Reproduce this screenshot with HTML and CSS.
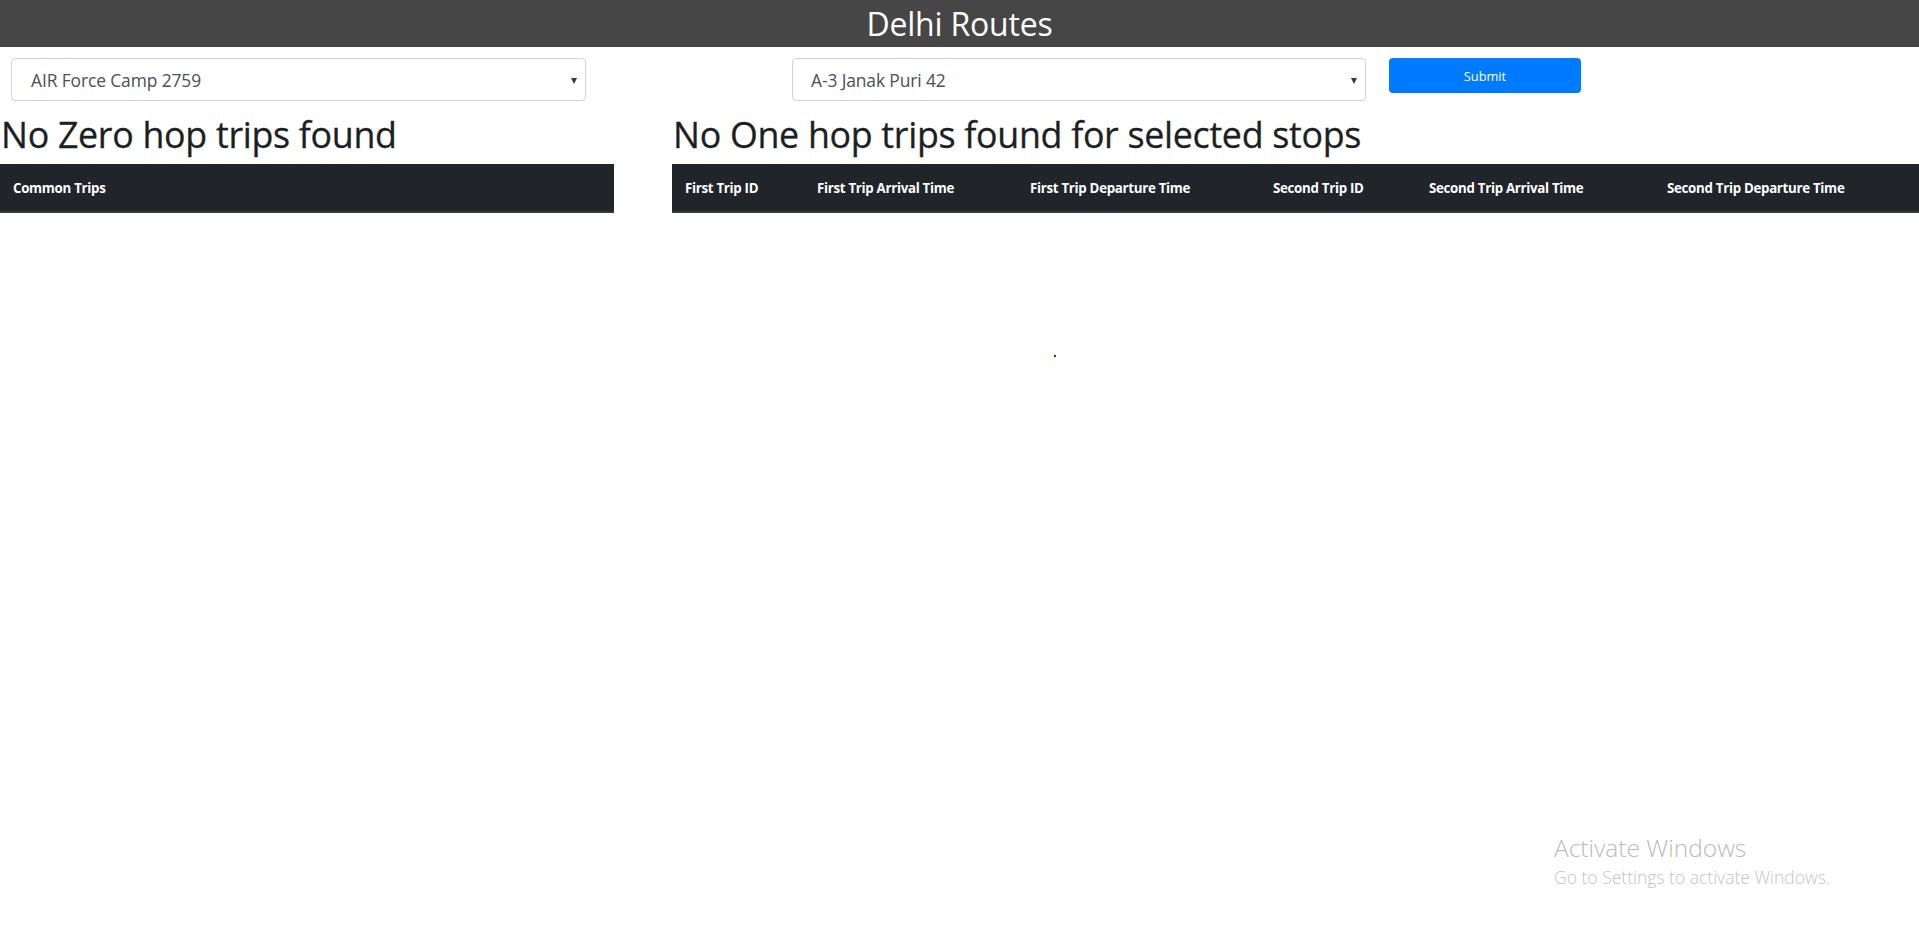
FILE: index.html
```html
<!DOCTYPE html>
<html lang="en">
<head>
<meta charset="utf-8">
<title>Delhi Routes</title>
<link rel="stylesheet" href="styles.css">
</head>
<body>
<header class="topbar">
  <h1 class="brand">Delhi Routes</h1>
</header>
<form class="stop-form">
  <div class="select-box select-from">
    <span class="select-text">AIR Force Camp 2759</span>
    <span class="caret"></span>
  </div>
  <div class="select-box select-to">
    <span class="select-text">A-3 Janak Puri 42</span>
    <span class="caret"></span>
  </div>
  <button type="button" class="btn-submit">Submit</button>
</form>
<main class="results">
  <section class="col-zero">
    <h2 class="result-title">No Zero hop trips found</h2>
    <table class="trip-table">
      <thead>
        <tr><th>Common Trips</th></tr>
      </thead>
    </table>
  </section>
  <section class="col-one">
    <h2 class="result-title">No One hop trips found for selected stops</h2>
    <table class="trip-table">
      <thead>
        <tr>
          <th class="c1">First Trip ID</th>
          <th class="c2">First Trip Arrival Time</th>
          <th class="c3">First Trip Departure Time</th>
          <th class="c4">Second Trip ID</th>
          <th class="c5">Second Trip Arrival Time</th>
          <th class="c6">Second Trip Departure Time</th>
        </tr>
      </thead>
    </table>
  </section>
</main>
<span class="dot"></span>
<div class="watermark">
  <div class="wm-title">Activate Windows</div>
  <div class="wm-sub">Go to Settings to activate Windows.</div>
</div>
</body>
</html>
```

FILE: styles.css
```css
html, body {
  margin: 0;
  padding: 0;
  background: #ffffff;
}

body {
  font-family: "Open Sans", "Noto Sans", sans-serif;
  color: #212529;
  width: 1919px;
  height: 938px;
  overflow: hidden;
  position: relative;
}

.topbar {
  height: 47px;
  background: #464646;
  display: flex;
  align-items: center;
  justify-content: center;
}

.brand {
  margin: 0;
  font-weight: 400;
  font-size: 32px;
  line-height: 47px;
  color: #ffffff;
  letter-spacing: -0.2px;
}

.stop-form {
  display: flex;
  align-items: flex-start;
  padding-top: 11px;
  margin: 0;
}

.select-box {
  box-sizing: border-box;
  height: 43px;
  border: 1px solid #ced4da;
  border-radius: 4px;
  display: flex;
  align-items: center;
  justify-content: space-between;
  padding: 0 8px 0 19px;
  color: #495057;
  font-size: 17.4px;
}

.select-from {
  margin-left: 11px;
  width: 575px;
}

.select-to {
  margin-left: 206px;
  width: 574px;
  padding-left: 18px;
}

.select-text {
  letter-spacing: -0.1px;
}

.caret {
  width: 0;
  height: 0;
  border-left: 3.5px solid transparent;
  border-right: 3.5px solid transparent;
  border-top: 6px solid #343a40;
  margin-top: 2px;
}

.btn-submit {
  margin-left: 23px;
  width: 192px;
  height: 35px;
  border: none;
  border-radius: 4px;
  background: #007bff;
  color: #ffffff;
  font-family: "Open Sans", "Noto Sans", sans-serif;
  font-size: 12.8px;
  padding: 0;
}

.results {
  display: flex;
  align-items: flex-start;
  margin-top: 11px;
}

.col-zero {
  width: 614px;
  flex: none;
}

.col-one {
  margin-left: 58px;
  flex: 1;
}

.result-title {
  margin: 1px 0 8px 1px;
  font-size: 35.8px;
  font-weight: 500;
  line-height: 43px;
  letter-spacing: -0.3px;
  color: #1c1f23;
  -webkit-text-stroke: 0.3px #1c1f23;
}

.trip-table {
  width: 100%;
  border-collapse: collapse;
}

.trip-table th {
  background: #212529;
  color: #ffffff;
  border-bottom: 2px solid #32383e;
  font-size: 13.3px;
  font-weight: 700;
  text-align: left;
  height: 46px;
  padding: 1px 13px 0;
  letter-spacing: -0.3px;
  white-space: nowrap;
}

.c1 { width: 106px; }
.c2 { width: 187px; }
.c3 { width: 217px; }
.c4 { width: 130px; }
.c5 { width: 212px; }

.dot {
  position: absolute;
  left: 1054px;
  top: 355px;
  width: 2px;
  height: 2px;
  background: #1f1fff;
}

.watermark {
  position: absolute;
  left: 1554px;
  top: 832px;
  color: #c2c2c2;
  font-family: "Open Sans", "Noto Sans", sans-serif;
  font-weight: 300;
}

.wm-title {
  font-size: 24.5px;
  line-height: 32px;
  color: #bbbbbb;
}

.wm-sub {
  font-size: 17.5px;
  line-height: 26px;
  color: #c4c4c4;
}
```
